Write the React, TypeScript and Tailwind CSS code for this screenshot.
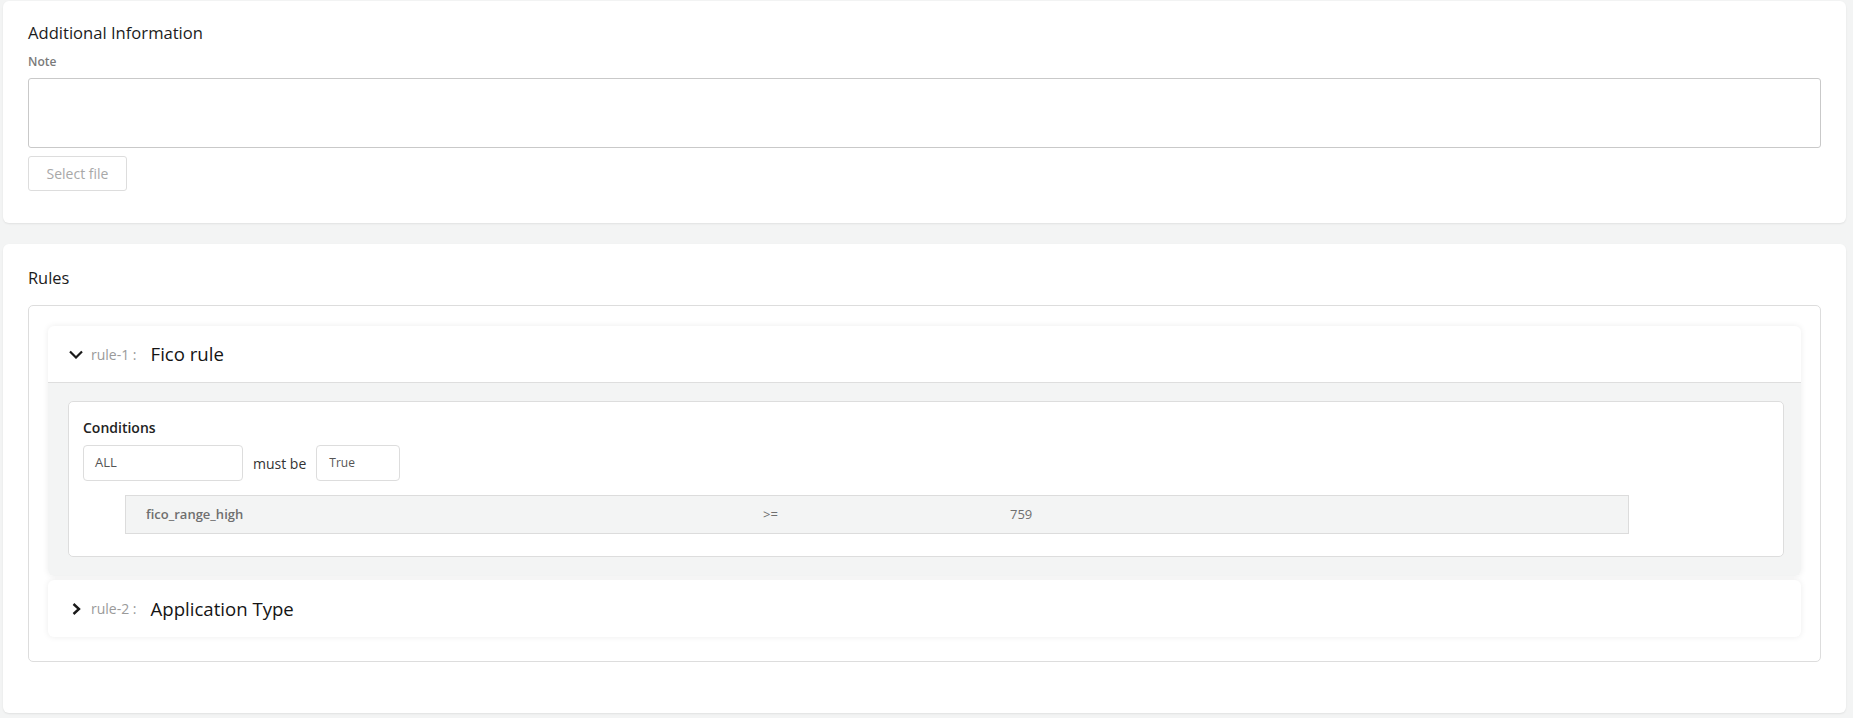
import React from 'react'

function ChevronDown() {
  return (
    <svg width="14" height="9" viewBox="0 0 14 9" fill="none">
      <polyline points="1,1.5 7,7.5 13,1.5" stroke="#1a1a1a" strokeWidth="2.2" />
    </svg>
  )
}

function ChevronRight() {
  return (
    <svg width="9" height="12" viewBox="0 0 9 12" fill="none">
      <polyline points="1.5,1 7,6 1.5,11" stroke="#1a1a1a" strokeWidth="2.4" />
    </svg>
  )
}

function RuleHeader({ id, name, open }: { id: string; name: string; open: boolean }) {
  return (
    <div className={`flex items-center h-[57px] pl-[21px] ${open ? 'border-b border-[#dedede]' : ''}`}>
      <div className="w-[22px] flex items-center">{open ? <ChevronDown /> : <span className="pl-[3px]"><ChevronRight /></span>}</div>
      <span className="text-[14px] text-[#9a9a9a]">{id} :</span>
      <span className="ml-[14px] text-[18.6px] text-[#141414]">{name}</span>
    </div>
  )
}

export default function App() {
  return (
    <div
      className="min-h-[718px] bg-[#f3f4f4] pl-[3px] pr-[7px] pt-px pb-[5px]"
      style={{ fontFamily: '"Open Sans", "Liberation Sans", sans-serif' }}
    >
      {/* Additional information */}
      <div className="bg-white rounded-md shadow-[0_1px_2px_rgba(0,0,0,0.08)] px-[25px] pt-5 pb-8">
        <h2 className="text-[16.6px] leading-6 text-[#1c1c1c]">Additional Information</h2>
        <div className="mt-[9px] text-[12px] leading-4 font-semibold text-[#7a7a7a]">Note</div>
        <textarea className="mt-2 block w-full h-[70px] border border-[#c9c9c9] rounded-[3px] resize-none outline-none" />
        <button className="mt-2 h-[35px] w-[99px] border border-[#dddddd] rounded-[3px] text-[14px] text-[#a8a8a8] bg-white">
          Select file
        </button>
      </div>

      {/* Rules */}
      <div className="mt-[21px] bg-white rounded-md shadow-[0_1px_2px_rgba(0,0,0,0.08)] px-[25px] pt-[22px] pb-[51px]">
        <h2 className="text-[16.4px] leading-6 text-[#1c1c1c]">Rules</h2>
        <div className="mt-[15px] border border-[#dddddd] rounded-[5px] px-[19px] pt-5 pb-6">
          <div className="bg-white rounded-md shadow-[0_0_6px_rgba(0,0,0,0.08)] overflow-hidden">
            <RuleHeader id="rule-1" name="Fico rule" open />
            <div className="bg-[#f3f4f4] pl-5 pr-[17px] pt-[18px] pb-[19px]">
              <div className="bg-white border border-[#dddddd] rounded-[5px] pl-[14px] pt-4 pb-[22px]">
                <div className="text-[14px] leading-5 font-semibold text-[#222]">Conditions</div>
                <div className="mt-[7px] flex items-center">
                  <div className="w-[160px] h-[36px] border border-[#dddddd] rounded-[4px] flex items-center pl-[11px] text-[13px] text-[#555]">
                    ALL
                  </div>
                  <span className="ml-[10px] text-[14px] text-[#333]">must be</span>
                  <div className="ml-[10px] w-[84px] h-[36px] border border-[#dddddd] rounded-[4px] flex items-center pl-[12px] text-[12px] text-[#555]">
                    True
                  </div>
                </div>
                <div className="mt-[14px] ml-[42px] mr-[154px] h-[39px] bg-[#f3f4f4] border border-[#dcdcdc] flex items-center text-[#6f6f6f]">
                  <div className="w-[637px] pl-5 text-[13px] font-semibold">fico_range_high</div>
                  <div className="w-[247px] text-[13px]">&gt;=</div>
                  <div className="flex-1 text-[13px]">759</div>
                </div>
              </div>
            </div>
          </div>
          <div className="mt-1 bg-white rounded-md shadow-[0_0_6px_rgba(0,0,0,0.08)]">
            <RuleHeader id="rule-2" name="Application Type" open={false} />
          </div>
        </div>
      </div>
    </div>
  )
}
